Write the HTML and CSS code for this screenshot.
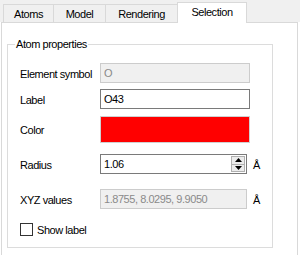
FILE: index.html
```html
<!DOCTYPE html>
<html>
<head>
<meta charset="utf-8">
<link rel="stylesheet" href="styles.css">
</head>
<body>
<div class="tabstrip">
  <div class="tab tab-atoms">Atoms</div>
  <div class="tab tab-model">Model</div>
  <div class="tab tab-rendering">Rendering</div>
  <div class="tab tab-selection active">Selection</div>
</div>
<div class="panel">
  <div class="group">
    <span class="legend">Atom properties</span>
    <div class="row row1">
      <span class="lbl">Element symbol</span>
      <div class="field disabled">O</div>
    </div>
    <div class="row row2">
      <span class="lbl">Label</span>
      <div class="field editable">O43</div>
    </div>
    <div class="row row3">
      <span class="lbl">Color</span>
      <div class="swatch"></div>
    </div>
    <div class="row row4">
      <span class="lbl">Radius</span>
      <div class="field editable short spinfield">
        <span class="val">1.06</span>
        <div class="spinner">
          <div class="spin up"><svg width="7" height="4" viewBox="0 0 7 4"><path d="M3.5 0 L7 4 L0 4 Z" fill="#000"/></svg></div>
          <div class="spin down"><svg width="7" height="4" viewBox="0 0 7 4"><path d="M0 0 L7 0 L3.5 4 Z" fill="#000"/></svg></div>
        </div>
      </div>
      <span class="unit">Å</span>
    </div>
    <div class="row row5">
      <span class="lbl">XYZ values</span>
      <div class="field disabled short">1.8755, 8.0295, 9.9050</div>
      <span class="unit">Å</span>
    </div>
    <div class="row row6">
      <span class="checkbox"></span>
      <span class="cblabel">Show label</span>
    </div>
  </div>
</div>
</body>
</html>
```
FILE: styles.css
```css
html, body {
  margin: 0;
  padding: 0;
  background: #ffffff;
  height: 255px;
  overflow: hidden;
}
body {
  font-family: "Liberation Sans", Arial, sans-serif;
  font-size: 11px;
  letter-spacing: -0.45px;
  color: #000;
}
.tabstrip {
  height: 22px;
  background: #f0f0f0;
  display: flex;
  align-items: flex-end;
  padding-left: 3px;
  box-sizing: border-box;
  position: relative;
  z-index: 1;
}
.tab {
  box-sizing: border-box;
  height: 18px;
  border: 1px solid #d9d9d9;
  border-bottom: none;
  background: #f0f0f0;
  display: flex;
  align-items: center;
  justify-content: center;
  margin-right: -1px;
  padding-top: 1px;
}
.tab-atoms { width: 51px; }
.tab-model { width: 53px; }
.tab-rendering { width: 73px; }
.tab-selection { width: 70px; }
.tab.active {
  height: 21px;
  background: #ffffff;
  margin-bottom: -1px;
  padding-top: 0;
  padding-bottom: 2px;
}
.panel {
  box-sizing: border-box;
  margin-left: 1px;
  width: 297px;
  height: 233px;
  border: 1px solid #d9d9d9;
  border-bottom: none;
  background: #fff;
  padding: 21px 0 0 5px;
}
.group {
  position: relative;
  box-sizing: border-box;
  width: 266px;
  border: 1px solid #dcdcdc;
  padding: 0 0 11px 12px;
  display: flex;
  flex-direction: column;
}
.legend {
  position: absolute;
  left: 7px;
  top: -8px;
  line-height: 14px;
  padding: 0 1px;
  background: #fff;
}
.row {
  display: flex;
  align-items: center;
  height: 20px;
}
.row1 { margin-top: 18px; }
.row2 { margin-top: 6px; }
.row3 { margin-top: 7px; height: 27px; }
.row4 { margin-top: 11px; }
.row5 { margin-top: 15px; }
.row6 { margin-top: 14px; height: 13px; }
.lbl {
  width: 80px;
  flex: none;
  padding-top: 1px;
}
.field {
  box-sizing: border-box;
  width: 150px;
  height: 20px;
  padding: 0 0 0 3px;
  display: flex;
  align-items: center;
  white-space: nowrap;
  overflow: hidden;
}
.field.short { width: 147px; }
.field.disabled {
  background: #f0f0f0;
  border: 1px solid #cccccc;
  color: #8a8a8a;
}
.field.editable {
  background: #fff;
  border: 1px solid #7a7a7a;
}
.spinfield {
  justify-content: space-between;
  padding-right: 1px;
}
.spinner {
  box-sizing: border-box;
  width: 14px;
  height: 16px;
  display: flex;
  flex-direction: column;
  border: 1px solid #b0b0b0;
  background: #ececec;
}
.spin {
  flex: 1;
  display: flex;
  align-items: center;
  justify-content: center;
}
.spin svg { display: block; }
.spin.up { border-bottom: 1px solid #b0b0b0; }
.swatch {
  box-sizing: border-box;
  width: 150px;
  height: 27px;
  background: #ff0000;
  border: 1px solid #d0d0d0;
}
.unit {
  margin-left: 6px;
  padding-top: 1px;
}
.checkbox {
  box-sizing: border-box;
  width: 13px;
  height: 13px;
  border: 1px solid #333333;
  background: #fff;
  flex: none;
}
.cblabel {
  margin-left: 4px;
}
```
